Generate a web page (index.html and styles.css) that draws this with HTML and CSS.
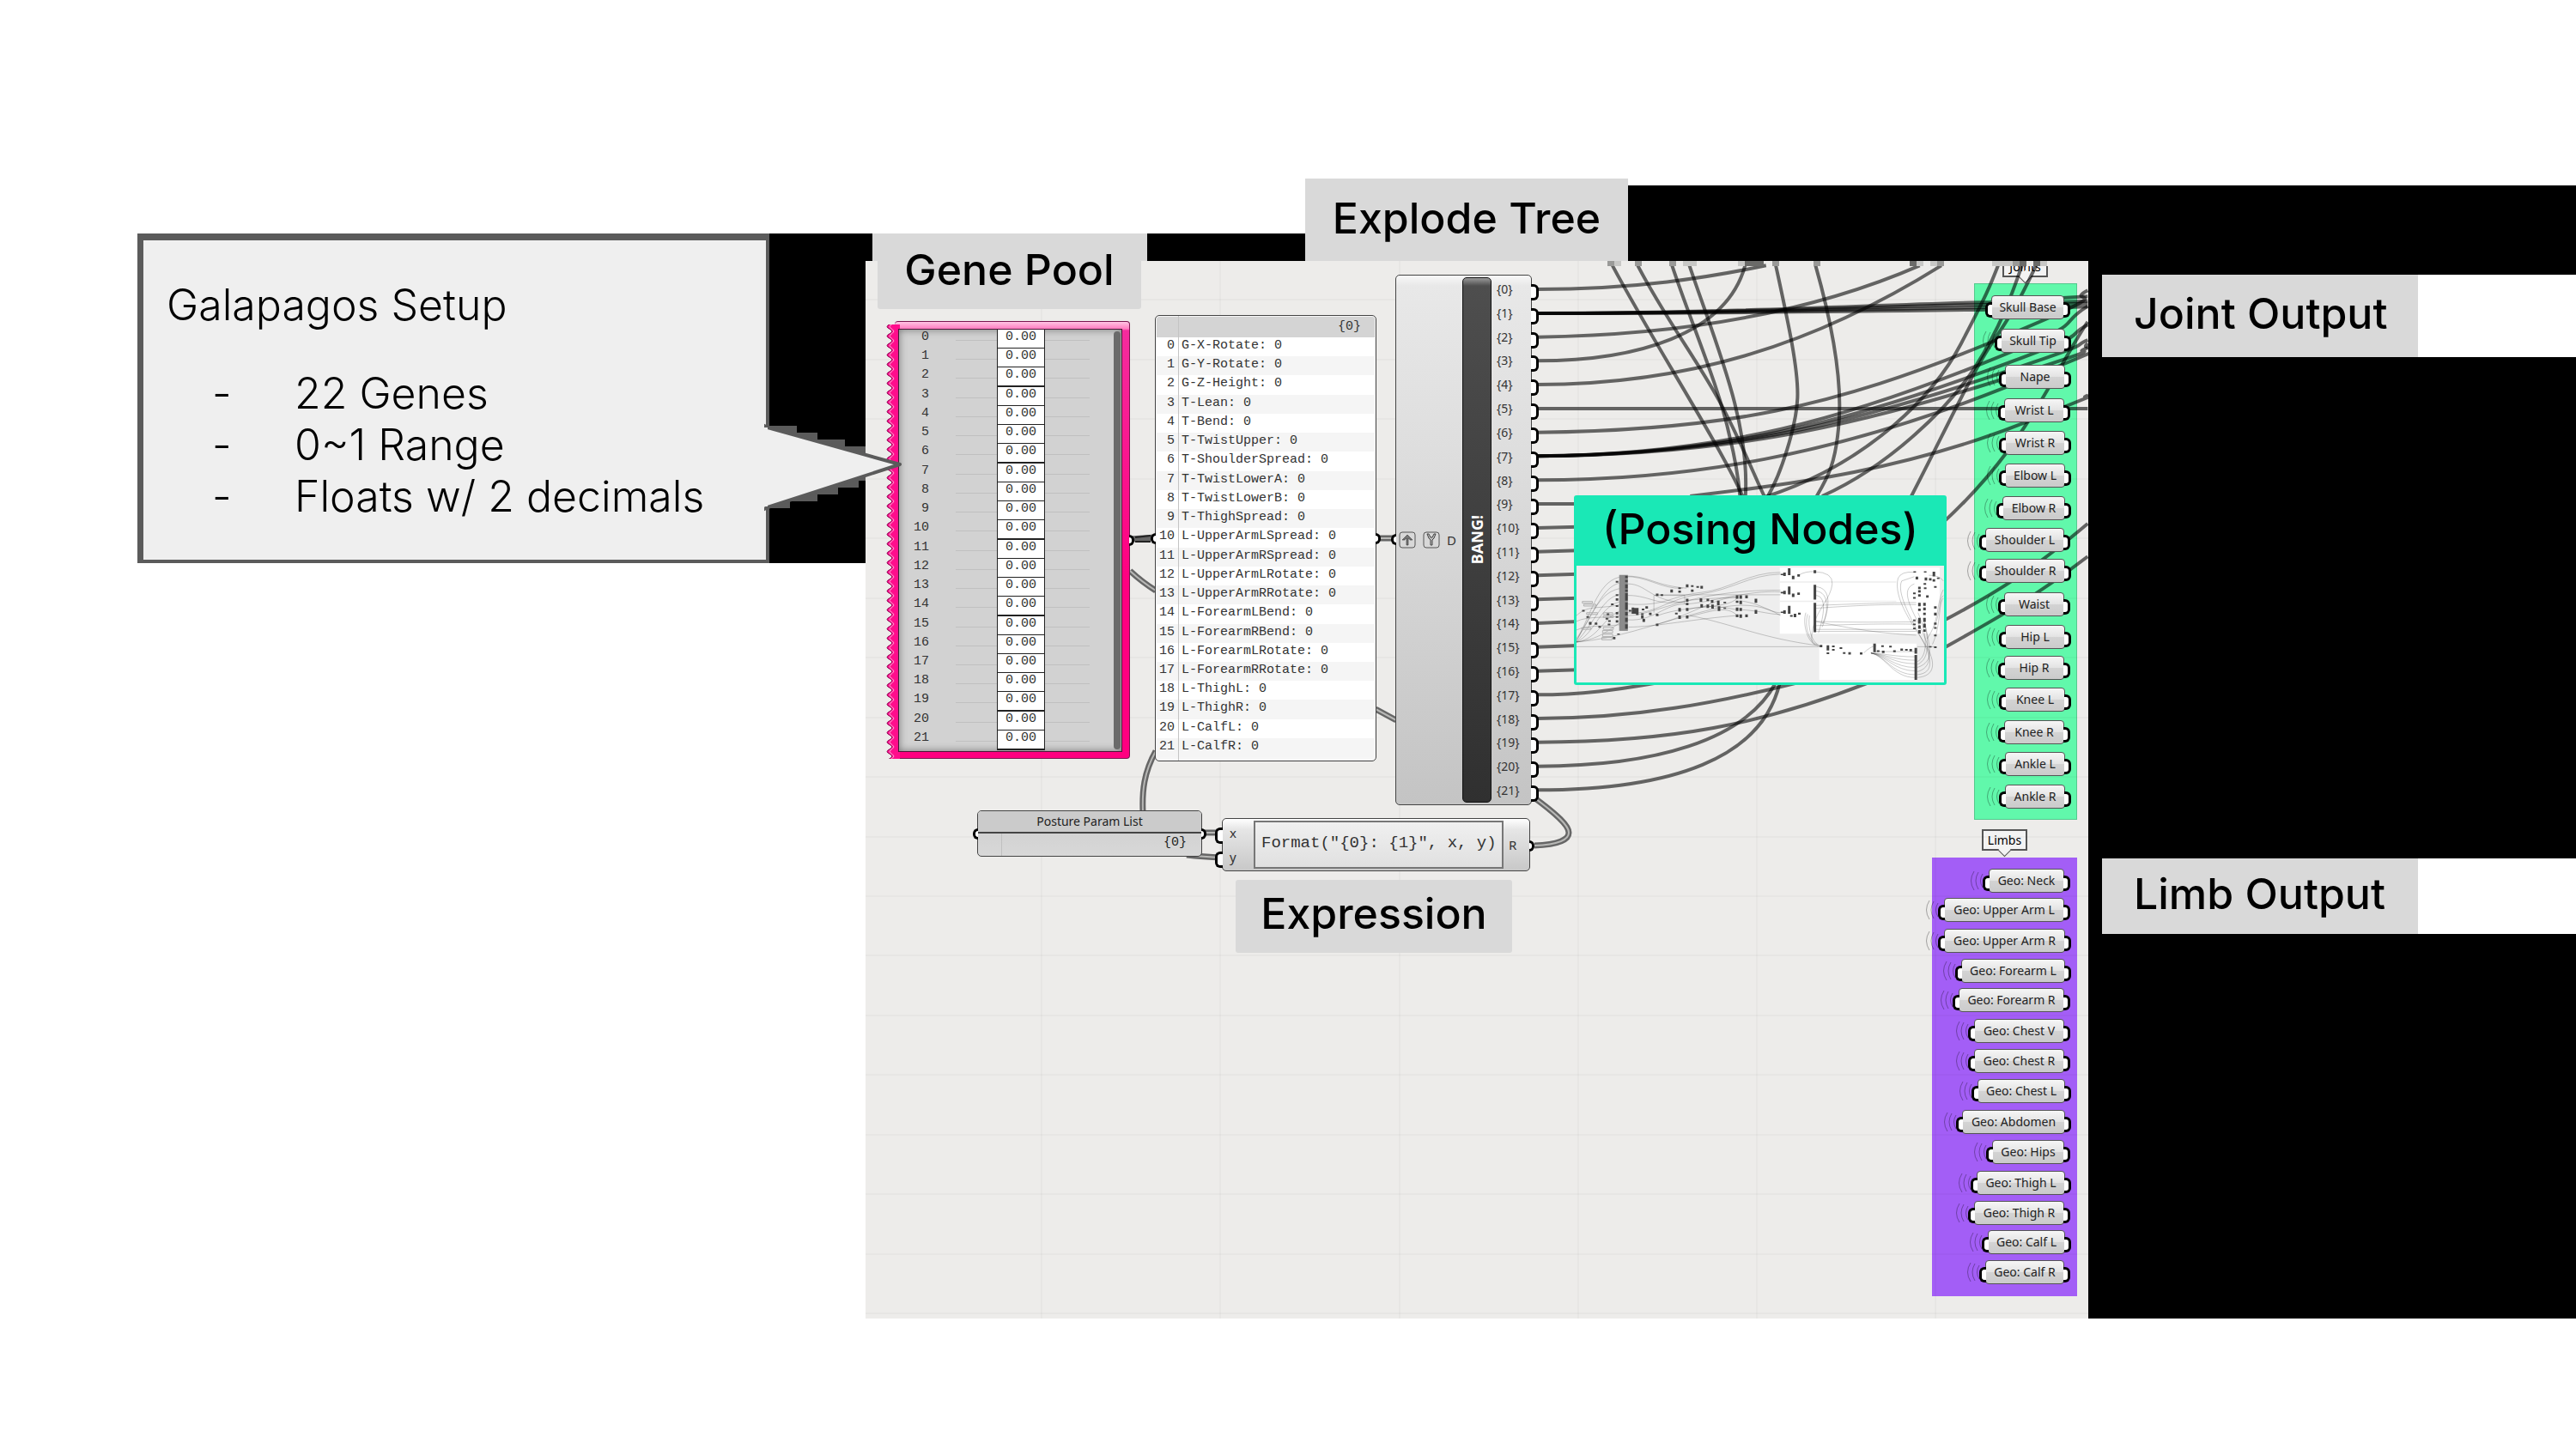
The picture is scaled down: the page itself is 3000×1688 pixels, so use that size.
FILE: index.html
```html
<!DOCTYPE html>
<html lang="en">
<head>
<meta charset="utf-8">
<meta name="viewport" content="width=device-width, initial-scale=1">
<title>Galapagos Setup</title>
<link rel="stylesheet" href="styles.css">
</head>
<body>
<main class="slide">
  <section class="intro">
    <div class="callout">
      <h1>Galapagos Setup</h1>
      <ul>
        <li>22 Genes</li>
        <li>0~1 Range</li>
        <li>Floats w/ 2 decimals</li>
      </ul>
    </div>
  </section>

  <section class="canvas">
    <div class="strip strip-left"></div>
    <div class="strip strip-mid"></div>
    <div class="strip strip-right"></div>
    <div class="group joints"></div>
    <div class="group limbs"></div>
    <div class="tag tag-joints">Joints</div>
    <div class="tag tag-limbs">Limbs</div>

    <svg class="wires" viewBox="1008 304 1424 1232" aria-hidden="true">
      <defs>
        <g id="w" fill="none" stroke="#000" stroke-opacity=".32" stroke-width="1">
          <path d="M-7-8q-5 8 0 16M-12-10q-6 10 0 20M-17-11q-7 11 0 22"/>
        </g>
      </defs>
      <path class="grid" d="M1008 349H2432M1008 419H2432M1008 488H2432M1008 558H2432M1008 627H2432M1008 697H2432M1008 766H2432M1008 836H2432M1008 905H2432M1008 975H2432M1008 1044H2432M1008 1113H2432M1008 1183H2432M1008 1252H2432M1008 1322H2432M1008 1391H2432M1008 1461H2432M1008 1530H2432M1213 304V1536M1421 304V1536M1630 304V1536M1838 304V1536M2046 304V1536M2254 304V1536"/>
      <g class="wire" transform="translate(1800 290) scale(.4209 .3333)">
        <path d="M-24 141C250 141 450 100 610 58"/>
        <path d="M-24 225C500 225 900 195 1230 186L1500 166"/>
        <path d="M-24 225C500 225 900 202 1230 194L1500 182"/>
        <path d="M-24 225C500 225 900 210 1230 204L1500 190"/>
        <path d="M-24 225C500 225 900 218 1230 212L1500 202"/>
        <path d="M-24 308C400 300 750 215 1035 58"/>
        <path d="M-24 391C250 391 500 300 552 58"/>
        <path d="M-24 474C400 474 750 330 1095 58"/>
        <path d="M-24 558H1500"/>
        <path d="M-24 641C500 635 800 550 1225 330S1420 200 1500 145"/>
        <path d="M-24 724C500 720 850 580 1190 410S1400 280 1500 200"/>
        <path d="M-24 724C500 720 850 595 1200 435S1420 320 1500 265"/>
        <path d="M-24 724C500 720 850 605 1210 455S1440 350 1500 318"/>
        <path d="M-24 724C500 720 850 620 1240 465S1430 380 1500 345"/>
        <path d="M-24 808C400 808 800 720 1270 485S1450 380 1500 330"/>
        <path d="M400 864C700 820 1000 770 1330 605S1450 540 1500 512"/>
        <path d="M185 58C300 330 480 680 545 864"/>
        <path d="M255 58C330 240 420 390 480 530S580 800 605 864"/>
        <path d="M350 58C400 250 480 480 510 660Q530 760 538 864"/>
        <path d="M398 58C470 330 565 600 553 864"/>
        <path d="M637 58C670 250 700 420 697 520S650 790 615 864"/>
        <path d="M747 58C790 250 820 450 812 600S780 800 750 864"/>
        <path d="M600 870C900 750 1080 500 1150 330S1230 130 1252 58"/>
        <path d="M765 864C950 760 1120 550 1190 410S1290 160 1318 58"/>
        <path d="M1012 864C1100 650 1180 430 1240 320S1330 130 1357 58"/>
        <path d="M1105 950C1250 780 1330 620 1390 490S1470 310 1500 255"/>
      </g>
      <g class="wire" transform="translate(1800 570) scale(.4209 .3333)">
        <path d="M-24 51H90M-24 135L90 131M-24 218L90 214M-24 301L90 296M-24 385L90 380M-24 468L90 462M-24 551L90 546M-24 635L90 631"/>
        <path d="M-24 718C100 718 200 700 300 678"/>
        <path d="M-24 801C250 801 480 745 690 678"/>
        <path d="M-24 884C350 884 600 820 890 678"/>
        <path d="M-24 968C300 968 550 880 637 676"/>
        <path d="M-24 1051C350 1051 600 940 648 676"/>
        <path d="M1100 460C1250 360 1350 280 1500 120"/>
        <path d="M1100 556C1250 450 1350 380 1500 235"/>
      </g>
      <g id="double">
        <path class="outer" d="M1787 985C1815 984 1827 978 1827 970S1815 950 1785 928M1602 826L1626 839M1316 665Q1330 678 1346 688M1346 875C1332 900 1330 922 1331 946M1316 628L1346 626M1602 627H1626M1399 970H1424M1382 996Q1400 998 1424 999"/>
        <path class="inner" d="M1787 985C1815 984 1827 978 1827 970S1815 950 1785 928M1602 826L1626 839M1316 665Q1330 678 1346 688M1346 875C1332 900 1330 922 1331 946M1602 627H1626M1399 970H1424M1382 996Q1400 998 1424 999"/>
      </g>
      <path fill="none" stroke="#222" stroke-width="2" d="M1322 626L1340 624M1322 631H1340"/>
      <path fill="#9a9a98" d="M1872 304h8v6h-8zM1904 304h8v6h-8zM1944 304h8v6h-8zM2064 304h8v6h-8zM2112 304h8v6h-8zM2256 304h8v6h-8zM2344 304h8v6h-8z"/>
      <path fill="#c8c8c6" d="M1880 304h8v6h-8zM1960 304h16v6h-16zM2024 304h8v6h-8zM2232 304h8v6h-8zM2248 304h8v6h-8zM2320 304h24v6h-24zM2376 304h8v6h-8z"/>
      <path fill="#6b6b69" d="M2032 304h22v6h-22zM2224 304h8v6h-8zM2352 304h8v6h-8zM2368 304h8v6h-8z"/>
      <use href="#w" x="2330" y="397"/><use href="#w" x="2335" y="439"/><use href="#w" x="2334" y="478"/><use href="#w" x="2335" y="516"/><use href="#w" x="2335" y="554"/><use href="#w" x="2332" y="592"/><use href="#w" x="2312" y="630"/><use href="#w" x="2312" y="665"/><use href="#w" x="2334" y="704"/><use href="#w" x="2335" y="742"/><use href="#w" x="2334" y="778"/><use href="#w" x="2335" y="815"/><use href="#w" x="2334" y="853"/><use href="#w" x="2335" y="890"/><use href="#w" x="2335" y="928"/>
      <use href="#w" x="2316" y="1026"/><use href="#w" x="2264" y="1060"/><use href="#w" x="2264" y="1096"/><use href="#w" x="2284" y="1131"/><use href="#w" x="2281" y="1165"/><use href="#w" x="2299" y="1201"/><use href="#w" x="2299" y="1236"/><use href="#w" x="2303" y="1271"/><use href="#w" x="2285" y="1307"/><use href="#w" x="2320" y="1342"/><use href="#w" x="2302" y="1378"/><use href="#w" x="2299" y="1413"/><use href="#w" x="2315" y="1447"/><use href="#w" x="2312" y="1482"/>
    </svg>

    <div class="gene-pool">
      <svg class="teeth" width="16" height="510" aria-hidden="true">
        <defs><pattern id="tooth" width="16" height="11" patternUnits="userSpaceOnUse">
          <path d="M7 0Q6 2 2 4Q0 6 2 7Q6 9 7 11H16V0z" fill="#ff0d8c"/>
          <path d="M7 0Q6 2 2 4Q0 6 2 7Q6 9 7 11" fill="none" stroke="#8a1458" stroke-width="1"/>
          <path d="M9 0Q8 2 5 4Q3 6 5 7Q8 9 9 11" fill="none" stroke="#ffa3d3" stroke-width="1"/>
        </pattern></defs>
        <rect width="16" height="506" y="3" fill="url(#tooth)"/>
      </svg>
      <div class="pool-body">
        <ol class="genes">
          <li><span>0</span><input value="0.00" aria-label="Gene 0"></li>
          <li><span>1</span><input value="0.00" aria-label="Gene 1"></li>
          <li><span>2</span><input value="0.00" aria-label="Gene 2"></li>
          <li><span>3</span><input value="0.00" aria-label="Gene 3"></li>
          <li><span>4</span><input value="0.00" aria-label="Gene 4"></li>
          <li><span>5</span><input value="0.00" aria-label="Gene 5"></li>
          <li><span>6</span><input value="0.00" aria-label="Gene 6"></li>
          <li><span>7</span><input value="0.00" aria-label="Gene 7"></li>
          <li><span>8</span><input value="0.00" aria-label="Gene 8"></li>
          <li><span>9</span><input value="0.00" aria-label="Gene 9"></li>
          <li><span>10</span><input value="0.00" aria-label="Gene 10"></li>
          <li><span>11</span><input value="0.00" aria-label="Gene 11"></li>
          <li><span>12</span><input value="0.00" aria-label="Gene 12"></li>
          <li><span>13</span><input value="0.00" aria-label="Gene 13"></li>
          <li><span>14</span><input value="0.00" aria-label="Gene 14"></li>
          <li><span>15</span><input value="0.00" aria-label="Gene 15"></li>
          <li><span>16</span><input value="0.00" aria-label="Gene 16"></li>
          <li><span>17</span><input value="0.00" aria-label="Gene 17"></li>
          <li><span>18</span><input value="0.00" aria-label="Gene 18"></li>
          <li><span>19</span><input value="0.00" aria-label="Gene 19"></li>
          <li><span>20</span><input value="0.00" aria-label="Gene 20"></li>
          <li><span>21</span><input value="0.00" aria-label="Gene 21"></li>
        </ol>
        <div class="scrollbar"></div>
      </div>
      <i class="nub out"></i>
    </div>

    <div class="panel">
      <i class="nub in"></i>
      <div class="panel-head">{0}</div>
      <ol class="panel-rows">
        <li><span>0</span>G-X-Rotate: 0</li>
        <li><span>1</span>G-Y-Rotate: 0</li>
        <li><span>2</span>G-Z-Height: 0</li>
        <li><span>3</span>T-Lean: 0</li>
        <li><span>4</span>T-Bend: 0</li>
        <li><span>5</span>T-TwistUpper: 0</li>
        <li><span>6</span>T-ShoulderSpread: 0</li>
        <li><span>7</span>T-TwistLowerA: 0</li>
        <li><span>8</span>T-TwistLowerB: 0</li>
        <li><span>9</span>T-ThighSpread: 0</li>
        <li><span>10</span>L-UpperArmLSpread: 0</li>
        <li><span>11</span>L-UpperArmRSpread: 0</li>
        <li><span>12</span>L-UpperArmLRotate: 0</li>
        <li><span>13</span>L-UpperArmRRotate: 0</li>
        <li><span>14</span>L-ForearmLBend: 0</li>
        <li><span>15</span>L-ForearmRBend: 0</li>
        <li><span>16</span>L-ForearmLRotate: 0</li>
        <li><span>17</span>L-ForearmRRotate: 0</li>
        <li><span>18</span>L-ThighL: 0</li>
        <li><span>19</span>L-ThighR: 0</li>
        <li><span>20</span>L-CalfL: 0</li>
        <li><span>21</span>L-CalfR: 0</li>
      </ol>
      <i class="nub out"></i>
    </div>

    <div class="explode">
      <i class="nub in"></i>
      <div class="explode-input">
        <svg width="20" height="20" viewBox="0 0 20 20" aria-hidden="true"><rect x="1" y="1" width="18" height="18" rx="3" fill="#d8d8d8" stroke="#555"/><path d="M10 4l6 6h-3v-1l-2-1v8H9V8L7 9v1H4z" fill="#777" stroke="#444" stroke-width=".7"/></svg>
        <svg width="20" height="20" viewBox="0 0 20 20" aria-hidden="true"><rect x="1" y="1" width="18" height="18" rx="3" fill="#d8d8d8" stroke="#555"/><path d="M5 3l2 5 2 2v6h2v-6l2-2 2-5-2 0-2 4h-2l-2-4z" fill="#bbb" stroke="#444"/></svg>
        <span>D</span>
      </div>
      <div class="bang"><span>BANG!</span></div>
      <ol class="branches">
        <li>{0}</li><li>{1}</li><li>{2}</li><li>{3}</li><li>{4}</li><li>{5}</li><li>{6}</li><li>{7}</li><li>{8}</li><li>{9}</li><li>{10}</li><li>{11}</li><li>{12}</li><li>{13}</li><li>{14}</li><li>{15}</li><li>{16}</li><li>{17}</li><li>{18}</li><li>{19}</li><li>{20}</li><li>{21}</li>
      </ol>
    </div>

    <div class="params">
      <i class="nub in"></i>
      <div class="params-title">Posture Param List</div>
      <div class="params-body">{0}</div>
      <i class="nub out"></i>
    </div>

    <div class="expression">
      <div class="ports"><span>x</span><span>y</span></div>
      <input class="formula" value='Format("{0}: {1}", x, y)' aria-label="Expression">
      <span class="result">R</span>
      <i class="nub out"></i>
    </div>

    <div class="posing">
      <h2>(Posing Nodes)</h2>
      <svg class="mini" viewBox="86 267 1016 405" preserveAspectRatio="none" aria-hidden="true">
        <path fill="#fff" d="M648 274H1090V503H648zM757 537H1026V663H757z"/>
        <path fill="#eee" d="M648 321H970V326H648zM648 388H970V393H648z"/>
        <g class="thin">
          <path d="M86 530C130 420 150 310 215 305S320 350 380 345M86 525C140 420 160 330 215 325M86 520C130 440 150 350 215 345M86 532C150 440 160 370 215 365M86 532C140 500 150 400 215 390M86 532C150 520 160 440 215 420M86 532C160 520 180 480 215 460M86 532C200 520 300 470 380 445S560 370 650 440M86 548H760M228 303C290 305 300 335 390 345M228 330C280 330 290 390 385 395M228 370C290 370 310 410 385 390M228 400C330 410 350 370 430 360S560 290 650 290M228 430C300 440 340 380 430 365S560 300 650 296M228 440C300 440 400 350 650 352M228 455C300 460 330 400 385 400S560 350 650 358M300 370H385V400M300 370V430M310 368H650M310 440C400 400 500 420 530 380M310 470C400 440 480 370 530 378M390 388C450 380 480 380 530 376M390 420C450 400 490 410 530 420M390 445C450 430 500 400 530 440M545 390C600 400 620 430 650 430M545 420C600 425 620 436 650 436M400 440C520 470 600 520 760 545M230 480C300 480 420 450 530 440M86 440C120 400 150 420 215 400M86 460C120 440 170 450 215 440M86 490C120 470 170 480 215 470"/>
          <path d="M700 300Q720 285 745 288Q795 290 793 330C790 380 750 420 740 480S740 540 760 546M745 340C800 340 780 440 765 470M745 355C790 355 780 440 765 480M745 370C780 370 770 440 755 500M720 430C710 470 725 530 745 540M725 435C715 480 730 530 750 540M730 440C725 480 735 530 755 542M745 405C850 400 950 395 1025 395M745 415C850 405 950 400 1025 402M745 460C850 465 950 462 1025 462M745 475C850 470 950 468 1025 470M745 488H1025M745 495H1025M745 460C830 480 900 500 1025 508"/>
          <path d="M880 570Q900 545 915 545M910 565H1025M900 570C940 580 960 655 1022 655M900 570C940 580 960 645 1022 645M900 570C940 578 965 632 1022 632M900 570C940 577 965 620 1022 620M900 570C940 575 965 607 1022 607M900 570C940 574 965 595 1022 595M900 570C940 572 965 583 1022 583"/>
          <path d="M1028 655C1080 650 1080 600 1050 540S960 380 975 310Q985 285 1020 290M1028 645C1075 640 1070 590 1040 520S970 360 985 320T1020 305M1028 635C1070 620 1070 570 1040 490S980 350 1020 330M1028 620C1080 600 1060 540 1050 470M1028 610C1065 590 1060 520 1045 450M1028 600C1060 580 1055 500 1030 430M1060 300Q1090 300 1100 320M1075 480C1095 420 1085 390 1100 370M1070 540C1095 470 1085 400 1100 380M1055 520C1090 460 1080 400 1100 350M1028 548H1080"/>
        </g>
        <path fill="#8b8b8b" d="M204 299H228V493H204z"/>
        <path fill="none" stroke="#b0b0b0" vector-effect="non-scaling-stroke" d="M102 391h28v6h-28zM106 401h34v6h-34zM114 430h30v6h-30zM160 430h26v6h-26zM160 441h28v6h-28zM160 480h28v8h-28zM158 492h28v8h-28zM158 505h28v8h-28zM156 516h28v8h-28zM100 482h26v6h-26z"/>
        <g class="blocks">
          <path d="M224 302v8M224 316v8M224 332v14M224 350v8M224 362v26M224 394v26M224 428v12M224 448v14M224 470v16M198 320v6M198 366v6M198 380v8M185 398v6M198 404v6M198 428v8M198 442v6M198 456v8M117 442v6M105 420v6M124 462v10M140 464v8M150 476v6M173 432v6M170 448v6M177 456v6M176 468v6M202 502v5M190 514v8M234 420v6M242 412v22M248 414v20M254 414v24M268 438v12M272 452v10M268 432v5M280 408v8M290 430v8M270 416v6M309 364v8M322 366v6M349 350v10M371 342v6M371 353v8M392 332v10M406 335v6M406 350v8M421 338v6M432 337v10M309 434v8M309 468v8M392 382v10M392 396v8M392 414v10M392 440v10M371 414v12M371 440v12M362 430v6M430 380v12M432 400v12M449 382v8M449 402v12M461 386v10M462 402v14M478 388v16M480 408v16M496 392v5M496 412v5M530 370v12M540 370v12M556 370v10M530 388v8M540 388v12M530 412v12M540 414v10M530 436v10M540 436v12M556 436v10M582 382v14M582 420v14"/>
          <path d="M654 295v5M661 291v12M674 276v24M685 302v12M700 297v8M745 283v10M654 358v5M661 354v12M674 339v28M685 364v12M700 360v8M654 426v5M661 422v12M674 406v28M680 438v6M690 434v12M702 430v7M745 333v52M745 396v102M762 542v8M781 543v18M781 568v6M796 544v6M796 556v6M817 550v6M826 567v6M841 567v8M873 568v7M910 537v30M920 560v6M932 543v6M934 562v8M954 545v6M965 560v7M985 554v8M998 556v6M1010 556v8M1024 552v20M1024 577v86"/>
          <path d="M1021 286v5M1050 286v5M1074 288v16M1027 305v10M1052 308v10M1064 310v8M1086 308v5M1074 314v8M1049 327v6M1034 340v8M1050 342v6M1078 338v6M1020 360v6M1034 352v8M1056 370v8M1034 366v8M1020 376v6M1034 396v12M1048 396v10M1048 412v10M1078 408v8M1034 416v8M1078 430v10M1048 430v8M1020 454v5M1034 448v20M1048 448v14M1034 474v12M1048 468v14M1034 490v12M1048 488v8M1078 464v8M1078 480v6M1078 506v6M1020 468v5M1020 482v5M1064 546v5M1078 547v6"/>
        </g>
      </svg>
    </div>

    <div class="node" style="left:1311px;top:40px;width:85px">Skull Base</div>
    <div class="node" style="left:1322px;top:79px;width:75px">Skull Tip</div>
    <div class="node" style="left:1327px;top:121px;width:70px">Nape</div>
    <div class="node" style="left:1326px;top:160px;width:70px">Wrist L</div>
    <div class="node" style="left:1327px;top:198px;width:70px">Wrist R</div>
    <div class="node" style="left:1327px;top:236px;width:70px">Elbow L</div>
    <div class="node" style="left:1324px;top:274px;width:73px">Elbow R</div>
    <div class="node" style="left:1304px;top:311px;width:92px">Shoulder L</div>
    <div class="node" style="left:1304px;top:347px;width:93px">Shoulder R</div>
    <div class="node" style="left:1326px;top:386px;width:70px">Waist</div>
    <div class="node" style="left:1327px;top:424px;width:70px">Hip L</div>
    <div class="node" style="left:1326px;top:460px;width:70px">Hip R</div>
    <div class="node" style="left:1327px;top:497px;width:70px">Knee L</div>
    <div class="node" style="left:1326px;top:535px;width:70px">Knee R</div>
    <div class="node" style="left:1327px;top:572px;width:70px">Ankle L</div>
    <div class="node" style="left:1327px;top:610px;width:70px">Ankle R</div>

    <div class="node" style="left:1308px;top:708px;width:88px">Geo: Neck</div>
    <div class="node" style="left:1256px;top:742px;width:140px">Geo: Upper Arm L</div>
    <div class="node" style="left:1256px;top:778px;width:141px">Geo: Upper Arm R</div>
    <div class="node" style="left:1276px;top:813px;width:121px">Geo: Forearm L</div>
    <div class="node" style="left:1273px;top:847px;width:123px">Geo: Forearm R</div>
    <div class="node" style="left:1291px;top:883px;width:105px">Geo: Chest V</div>
    <div class="node" style="left:1291px;top:918px;width:105px">Geo: Chest R</div>
    <div class="node" style="left:1295px;top:953px;width:102px">Geo: Chest L</div>
    <div class="node" style="left:1277px;top:989px;width:120px">Geo: Abdomen</div>
    <div class="node" style="left:1312px;top:1024px;width:84px">Geo: Hips</div>
    <div class="node" style="left:1294px;top:1060px;width:103px">Geo: Thigh L</div>
    <div class="node" style="left:1291px;top:1095px;width:105px">Geo: Thigh R</div>
    <div class="node" style="left:1307px;top:1129px;width:90px">Geo: Calf L</div>
    <div class="node" style="left:1304px;top:1164px;width:92px">Geo: Calf R</div>

    <h2 class="label label-pool">Gene Pool</h2>
    <h2 class="label label-tree">Explode Tree</h2>
    <h2 class="label label-expression">Expression</h2>

    <svg class="pointer" width="160" height="104" viewBox="890 492 160 104" aria-hidden="true">
      <path fill="#5b5b5b" d="M896 496h32v8h24v8h32v8h24v40h-8v8h-24v8h-24v8h-32v8h-24z"/>
      <path fill="#efefef" stroke="#5b5b5b" stroke-width="4" stroke-linejoin="round" d="M888 495L894 498L1048 541L894 591L888 594"/>
      <path fill="#efefef" d="M890 498h4v92h-4z"/>
    </svg>
  </section>

  <section class="outputs">
    <div class="output-row joint"><h2>Joint Output</h2></div>
    <div class="output-row limb"><h2>Limb Output</h2></div>
  </section>
</main>
</body>
</html>
```
FILE: styles.css
```css
* { box-sizing: border-box; }
body { margin: 0; background: #fff; color: #000; font-family: "Noto Sans", "Open Sans", sans-serif; }
h1, h2, ul, ol { margin: 0; padding: 0; }
h2 { font-weight: 500; }
ul, ol { list-style: none; }
input { margin: 0; padding: 0; border-radius: 0; color: inherit; }

.slide {
  display: grid;
  grid-template-columns: 848px 1424px 1fr;
  align-items: start;
  padding: 216px 0 152px 160px;
  overflow: hidden;
}
h1, h2, .callout { font-family: Inter, sans-serif; font-size: 50px; line-height: 60px; }

/* Callout */
.intro { margin-top: 56px; padding-right: 112px; background: #000; }
.callout {
  padding: 45px 27px 44px;
  border: solid #5b5b5b;
  border-width: 8px 4px 4px 7px;
  background: #efefef;
  font-weight: 300;
}
.callout h1 { margin-bottom: 43px; font-weight: 300; }
.callout li { display: grid; grid-template-columns: 96px 1fr; padding-left: 53px; }
.callout li::before { content: "-"; }

/* Node canvas */
.canvas { position: relative; height: 1232px; margin-top: 88px; background: #edecea; }
.strip { position: absolute; background: #000; }
.strip-left { left: 0; top: -32px; width: 8px; height: 32px; }
.strip-mid { left: 328px; top: -32px; width: 184px; height: 32px; }
.strip-right { left: 888px; top: -88px; width: 536px; height: 88px; }
.wires { position: absolute; inset: 0; width: 100%; height: 100%; }
.grid { fill: none; stroke: #000; stroke-opacity: .05; stroke-width: 1; }
.wire { fill: none; stroke: #000; stroke-opacity: .58; stroke-width: 4; }
.wire path { vector-effect: non-scaling-stroke; }
.outer { fill: none; stroke: #666; stroke-width: 7; }
.inner { fill: none; stroke: #b8b8b6; stroke-width: 2; }

.group { position: absolute; }
.joints { left: 1291px; top: 26px; width: 120px; height: 625px; background: #61f8ab; border: 1px solid #54c98e; }
.limbs { left: 1242px; top: 695px; width: 169px; height: 511px; background: #a35ef6; }
.tag {
  position: absolute;
  width: 53px;
  height: 25px;
  border: 2px solid #555;
  background: #f3f3f3;
  font-size: 14px;
  line-height: 21px;
  text-align: center;
}
.tag::after {
  content: "";
  position: absolute;
  left: 19px;
  bottom: -7px;
  width: 10px;
  height: 10px;
  border: solid #555;
  border-width: 0 1px 1px 0;
  background: #f3f3f3;
  transform: rotate(45deg);
}
.tag-joints { left: 1324px; top: -6px; clip-path: inset(12px 0 -10px); }
.tag-limbs { left: 1300px; top: 662px; }

.nub {
  position: absolute;
  width: 6px;
  height: 13px;
  margin-top: -6px;
  border: 3px solid #000;
  background: #fff;
}
.nub.in, .node::before { border-right: 0; border-radius: 6px 0 0 6px; right: 100%; }
.nub.out, .node::after { border-left: 0; border-radius: 0 6px 6px 0; left: 100%; }

.node {
  position: absolute;
  height: 28px;
  border: 1px solid #555;
  border-radius: 4px;
  background: linear-gradient(#f6f6f6, #e4e4e4 48%, #d3d3d3 52%, #cbcbcb);
  color: #222;
  font-size: 14px;
  line-height: 25px;
  text-align: center;
  white-space: nowrap;
}
.node::before, .node::after {
  content: "";
  position: absolute;
  top: 7px;
  width: 5px;
  height: 12px;
  border-width: 3px;
  border-style: solid;
  border-color: #000;
  background: #fff;
}
.node::before { border-right: 0; }
.node::after { border-left: 0; }

/* Gene pool */
.gene-pool {
  position: absolute;
  left: 34px;
  top: 70px;
  width: 274px;
  height: 510px;
  padding: 8px 8px 8px 4px;
  border: 1px solid #7a1450;
  border-left: 0;
  border-radius: 4px;
  background: linear-gradient(#ffc4e3, #ff7cc0 8px, #f52c9d 10px, #ff0080 60%);
}
.teeth { position: absolute; left: -10px; top: 0; }
.pool-body {
  position: relative;
  height: 493px;
  padding-bottom: 2px;
  border: 1px solid #4a1636;
  background: #d2d2d2;
  box-shadow: inset 0 0 10px #777;
}
.genes { display: flex; flex-direction: column; height: 100%; font: 15px/18px "Liberation Mono", monospace; color: #333; }
.genes li { position: relative; display: grid; flex: 1; grid-template-columns: 35px 1fr; min-height: 0; }
.genes li::before { content: ""; position: absolute; left: 66px; top: 12px; width: 156px; border-top: 1px solid #c0c0c0; }
.genes span { text-align: right; }
.genes input {
  position: relative;
  justify-self: start;
  width: 56px;
  height: 100%;
  margin-left: 79px;
  padding-bottom: 4px;
  border: solid #222;
  border-width: 0 1px 2px;
  background: #fff;
  font: inherit;
  text-align: center;
}
.scrollbar { position: absolute; right: 1px; top: 2px; bottom: 2px; width: 8px; border-radius: 4px; background: #6a6a6a; }
.gene-pool .nub { top: 254px; }

/* Data panel */
.panel {
  position: absolute;
  left: 337px;
  top: 63px;
  width: 258px;
  height: 520px;
  padding: 1px 1px 4px;
  border: 1px solid #444;
  border-radius: 5px;
  background: #f6f6f6;
  color: #333;
  font: 15px/20px "Liberation Mono", monospace;
}
.panel-head { height: 24px; padding: 2px 16px 0 0; border-radius: 3px 3px 0 0; background: #d4d4d4; text-align: right; }
.panel-rows { display: flex; flex-direction: column; height: 489px; background: #f5f5f5; }
.panel-rows li { display: grid; flex: 1; grid-template-columns: 21px 1fr; column-gap: 8px; min-height: 0; white-space: nowrap; }
.panel-rows li:nth-child(odd) { background: #fff; }
.panel-rows span { text-align: right; }
.panel::after { content: ""; position: absolute; left: 26px; top: 0; bottom: 0; border-left: 1px solid #c4c4c4; }
.panel .nub { top: 259px; }

/* Explode tree */
.explode {
  position: absolute;
  left: 617px;
  top: 16px;
  display: grid;
  grid-template-columns: 77px 34px 1fr;
  grid-template-rows: minmax(0, 1fr);
  width: 159px;
  height: 618px;
  padding: 2px 0;
  border: 1px solid #444;
  border-radius: 5px;
  background: linear-gradient(#f8f8f8, #e8e8e8 12px, #dfdfdf 30%, #c4c4c4);
  color: #333;
  font-size: 14px;
}
.explode > .nub { top: 307px; }
.explode-input { display: flex; align-items: center; gap: 8px; padding-left: 3px; }
.explode-input span { font-size: 15px; }
.bang {
  display: grid;
  place-items: center;
  border: 1px solid #111;
  border-radius: 5px;
  background: linear-gradient(#999, #4e4e4e 9px, #454545 30%, #303030);
  color: #fff;
  font-size: 18px;
  font-weight: 700;
}
.bang span { writing-mode: vertical-rl; transform: rotate(180deg); }
.branches { display: flex; flex-direction: column; line-height: 27px; }
.branches li { position: relative; flex: 1; min-height: 0; padding-left: 6px; }
.branches li::after {
  content: "";
  position: absolute;
  left: 100%;
  top: 8px;
  width: 6px;
  height: 13px;
  border: 3px solid #000;
  border-left: 0;
  border-radius: 0 6px 6px 0;
  background: #fff;
}

/* Posture parameters and expression */
.params {
  position: absolute;
  left: 130px;
  top: 640px;
  width: 262px;
  height: 54px;
  border: 1px solid #444;
  border-radius: 5px;
  background: linear-gradient(90deg, transparent 27px, #c0c0c0 27px, #c0c0c0 28px, transparent 28px), linear-gradient(#ccc, #d8d8d8);
  color: #222;
  font-size: 14px;
  line-height: 24px;
}
.params-title { border-bottom: 2px solid #444; border-radius: 4px 4px 0 0; background: #cbcbcb; text-align: center; }
.params-body { padding-right: 17px; font: 15px/22px "Liberation Mono", monospace; text-align: right; }
.params .nub { top: 26px; }
.expression {
  position: absolute;
  left: 415px;
  top: 649px;
  display: grid;
  grid-template-columns: 36px 291px 1fr;
  width: 359px;
  height: 62px;
  padding: 2px 0;
  border: 1px solid #444;
  border-radius: 5px;
  background: linear-gradient(#fff, #e6e6e6 20%, #c8c8c8);
  color: #333;
  font-size: 15px;
}
.ports { display: grid; line-height: 28px; }
.ports span { position: relative; padding-left: 8px; }
.ports span::before {
  content: "";
  position: absolute;
  right: 100%;
  top: 8px;
  width: 6px;
  height: 13px;
  border: 3px solid #000;
  border-right: 0;
  border-radius: 6px 0 0 6px;
  background: #fff;
}
.formula {
  width: 100%;
  height: 56px;
  padding: 0 7px 4px;
  border: 2px solid #777;
  background: linear-gradient(#f0f0f0, #e0e0e0);
  font: 19px "Liberation Mono", monospace;
}
.result { padding-left: 6px; line-height: 56px; }
.expression > .nub { top: 31px; }

/* Posing nodes */
.posing {
  position: absolute;
  left: 825px;
  top: 273px;
  width: 434px;
  height: 221px;
  padding: 0 3px 3px;
  border-radius: 3px;
  background: #1ae8b6;
}
.posing h2 { height: 82px; padding-top: 9px; text-align: center; }
.mini { display: block; width: 100%; height: 136px; background: #eee; }
.thin path { fill: none; stroke: #000; stroke-opacity: .2; stroke-width: 1; vector-effect: non-scaling-stroke; }
.blocks path { fill: none; stroke: #444; stroke-width: 3; vector-effect: non-scaling-stroke; }

/* Slide labels */
.label { position: absolute; background: #d9d9d9; text-align: center; white-space: nowrap; }
.label-pool { left: 14px; top: -32px; width: 307px; height: 88px; padding-top: 12px; border-radius: 0 0 3px 3px; }
.label-pool::before { content: ""; position: absolute; z-index: -1; left: -6px; top: 0; width: 320px; height: 36px; background: #d9d9d9; }
.label-tree { left: 512px; top: -96px; width: 376px; height: 96px; padding-top: 16px; }
.label-expression { left: 431px; top: 721px; width: 322px; height: 85px; padding-top: 9px; border-radius: 3px; }
.pointer { position: absolute; left: -118px; top: 188px; }

/* Output bands */
.outputs { height: 1320px; padding: 104px 0 0 16px; background: #000; }
.output-row { background: #fff; }
.output-row h2 { width: 368px; padding-left: 37px; background: #d9d9d9; }
.joint h2 { height: 96px; padding-top: 15px; }
.limb { margin-top: 584px; }
.limb h2 { height: 88px; padding-top: 11px; }
```
